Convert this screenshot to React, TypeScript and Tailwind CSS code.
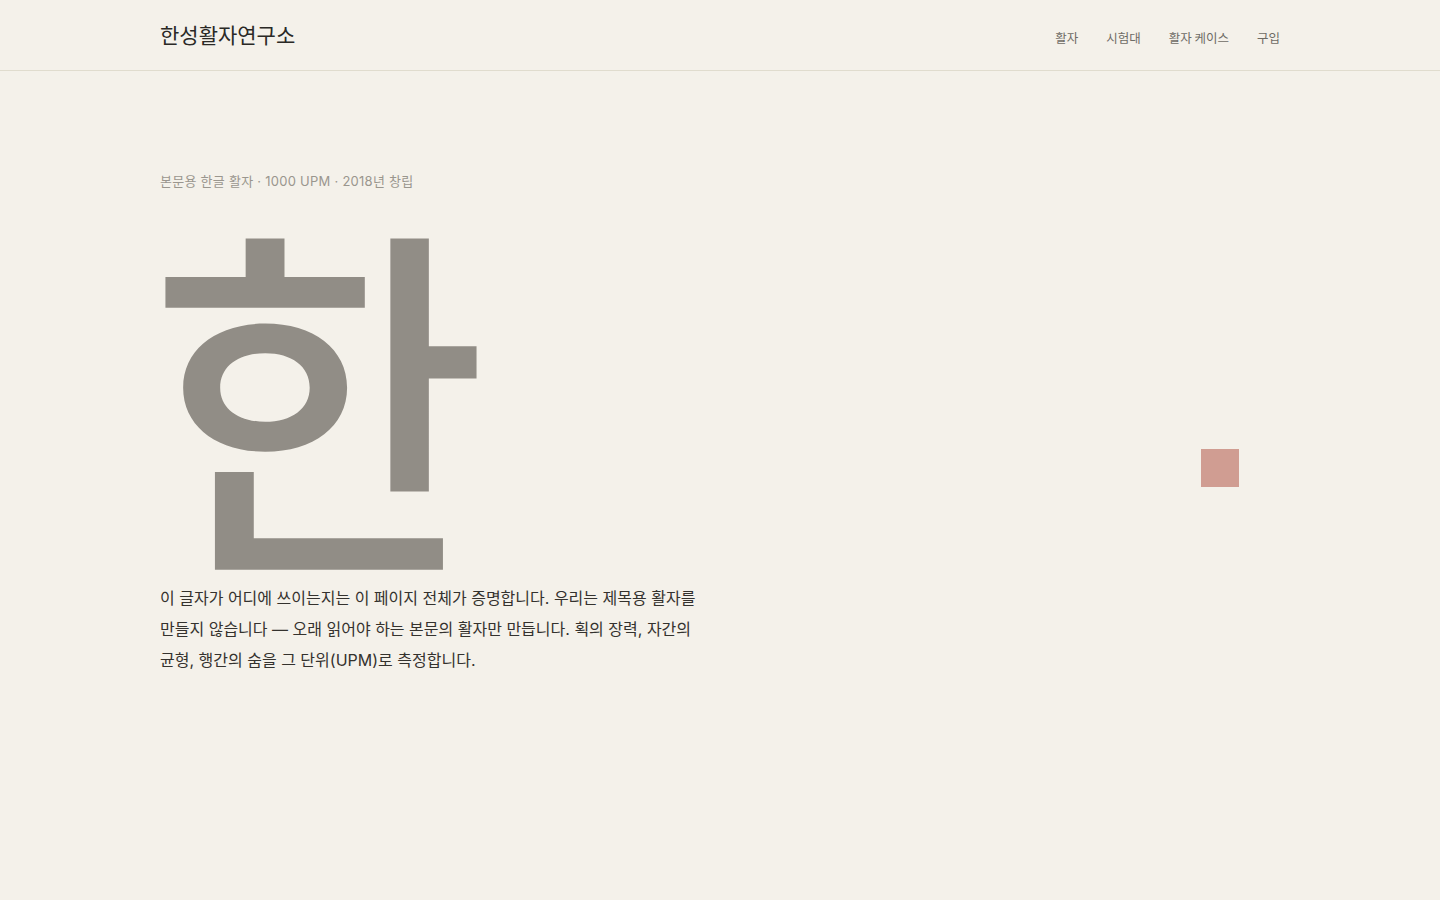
import React from "react";

const sans = { fontFamily: '"Inter", "Noto Sans CJK KR", sans-serif' };
const cjk = { fontFamily: '"Noto Sans CJK KR", "Noto Sans", sans-serif' };

export default function App() {
  return (
    <div className="min-h-screen bg-[#f4f1ea] text-[#2b2a27]" style={cjk}>
      <header className="border-b border-[#e0dcce]">
        <div className="mx-auto flex h-[70px] w-[1120px] items-center justify-between">
          <div className="text-[21px] font-normal text-[#2a2926]">한성활자연구소</div>
          <nav className="mt-[6px] flex items-center gap-[28px] text-[12.5px] text-[#6e6b65]">
            <a>활자</a>
            <a>시험대</a>
            <a>활자 케이스</a>
            <a>구입</a>
          </nav>
        </div>
      </header>
      <main className="relative mx-auto w-[1120px] pt-[100px]">
        <p className="text-[13px] leading-[20px] tracking-[0.02em] text-[#9a968e]" style={sans}>본문용 한글 활자 · 1000 UPM · 2018년 창립</p>
        <div className="mt-[37px] h-[345px] -ml-[12px] overflow-visible text-[370px] leading-[314px] font-medium text-[#918d86]">한</div>
        <p className="mt-[10px] w-[545px] break-keep text-[16px] leading-[31px] text-[#34322e]" style={sans}>
          이 글자가 어디에 쓰이는지는 이 페이지 전체가 증명합니다. 우리는 제목용 활자를 만들지 않습니다 — 오래 읽어야 하는 본문의 활자만 만듭니다. 획의 장력, 자간의 균형, 행간의 숨을 그 단위(UPM)로 측정합니다.
        </p>
        <div className="absolute left-[1041px] top-[378px] h-[38px] w-[38px] bg-[#d09d92]" />
      </main>
    </div>
  );
}
